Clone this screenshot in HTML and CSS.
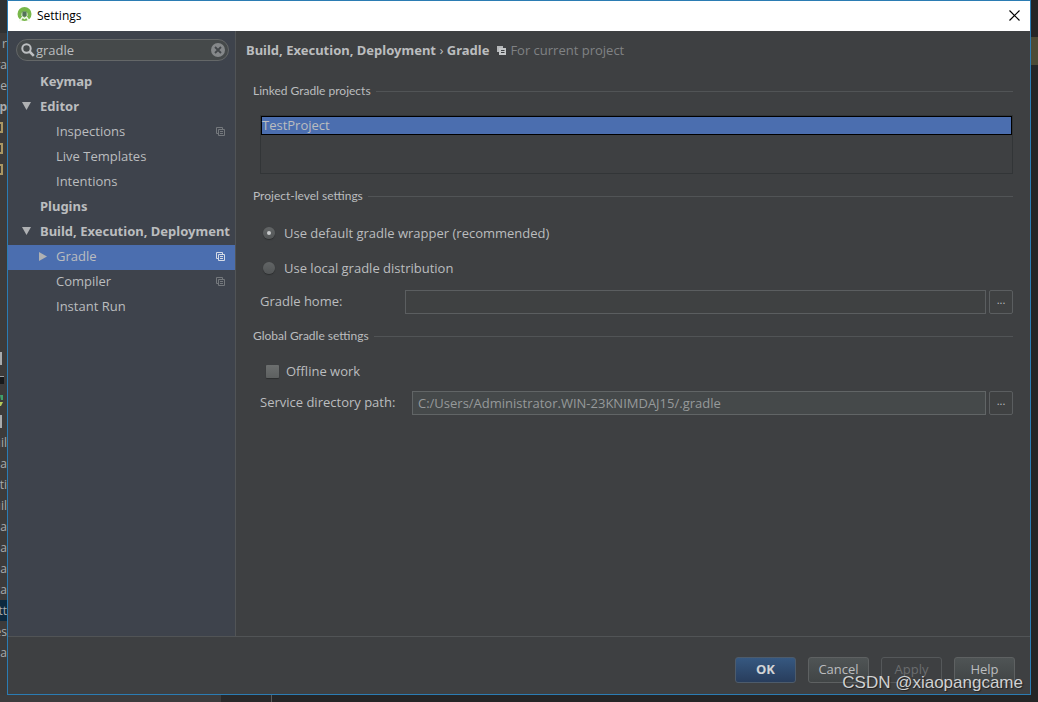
FILE: index.html
```html
<!DOCTYPE html>
<html lang="en">
<head>
<meta charset="utf-8">
<title>Settings</title>
<link rel="stylesheet" href="styles.css">
</head>
<body>
<svg class="defs" aria-hidden="true">
  <symbol id="copy" viewBox="0 0 9 9">
    <path d="M2.5 6.5H.5V.5H6.5V2.5M2.5 2.5H8.5V8.5H2.5ZM4 4.5H7M4 6.5H7" fill="none" stroke="currentColor"/>
  </symbol>
</svg>
<div class="desktop">
  <aside class="strip" aria-hidden="true">
    <span>r</span><span>ra</span><span>.e</span><span class="bold">op</span>
    <span class="folder"><i></i></span><span class="folder"><i></i></span><span class="folder"><i></i></span>
    <span class="blank"></span>
    <span class="bar"><i></i></span><span class="chip"><i></i></span>
    <span class="run"><svg width="3" height="12" viewBox="0 0 3 12"><path d="M0 0H3V5H1Z" fill="#3fa06a"/><path d="M0 7H3L1 11H0Z" fill="#b5c95a"/></svg></span>
    <span class="bar"><i></i></span>
    <span>uil</span><span>a</span><span>ti</span><span>uil</span><span>a</span><span>a</span><span>a</span><span>ca</span><span class="current">tt</span><span>es</span><span>na</span>
  </aside>

  <main class="dialog">
    <header class="titlebar">
      <svg class="logo" width="15" height="16" viewBox="0 0 15 16">
        <circle cx="7.5" cy="7" r="7" fill="#78b74a"/>
        <path d="M4 8a3.5 3.5 0 0 1 7 0v1H4Z" fill="#b9d6a6"/>
        <path d="M5.500 4.500h4v5h-4Z" fill="#55715a"/>
        <path d="M2.500 14.500l3-4.500 2 1.500 2-1.500 3 4.500" stroke="#f3f9ef" stroke-width="1.500" fill="none"/>
      </svg>
      <h1>Settings</h1>
      <button class="close" aria-label="Close"><svg width="11" height="11" viewBox="0 0 11 11"><path d="M.5.5l10 10M10.500.5l-10 10" stroke="#000" stroke-width="1.200"/></svg></button>
    </header>

    <div class="body">
      <nav class="sidebar">
        <div class="search">
          <svg width="14" height="14" viewBox="0 0 14 14"><circle cx="5.500" cy="5.500" r="4.200" fill="none" stroke="#bdbfc1" stroke-width="2"/><path d="M8.500 8.500l4.300 4.300" stroke="#bdbfc1" stroke-width="2.600"/></svg>
          <input type="text" value="gradle" aria-label="Search settings">
          <button aria-label="Clear search"><svg width="14" height="14" viewBox="0 0 14 14"><circle cx="7" cy="7" r="7" fill="#85888a"/><path d="M4 4l6 6M10 4l-6 6" stroke="#43474a" stroke-width="1.800"/></svg></button>
        </div>
        <ul class="tree">
          <li class="top">Keymap</li>
          <li class="top"><svg class="arrow" width="9" height="8" viewBox="0 0 9 8"><path d="M0 0H9L4.500 8Z"/></svg>Editor</li>
          <li>Inspections<svg class="copy"><use href="#copy"/></svg></li>
          <li>Live Templates</li>
          <li>Intentions</li>
          <li class="top">Plugins</li>
          <li class="top"><svg class="arrow" width="9" height="8" viewBox="0 0 9 8"><path d="M0 0H9L4.500 8Z"/></svg>Build, Execution, Deployment</li>
          <li class="selected"><svg class="arrow" width="8" height="9" viewBox="0 0 8 9"><path d="M0 0V9L8 4.500Z"/></svg>Gradle<svg class="copy"><use href="#copy"/></svg></li>
          <li>Compiler<svg class="copy"><use href="#copy"/></svg></li>
          <li>Instant Run</li>
        </ul>
      </nav>

      <section class="content">
        <div class="crumbs">
          <h2>Build, Execution, Deployment <span class="sep">›</span> Gradle</h2>
          <svg width="9" height="9" viewBox="0 0 9 9"><path d="M0 0H6V2H2V6H0Z" fill="#b5b7b9"/><path d="M2 2H9V9H2Z" fill="#c4c6c8"/><path d="M4 4.500H7.500M4 6.500H7.500" stroke="#3c3f41"/></svg>
          <span class="scope">For current project</span>
        </div>

        <h3>Linked Gradle projects</h3>
        <div class="group">
          <ul class="projects"><li>TestProject</li></ul>
        </div>

        <h3>Project-level settings</h3>
        <div class="group">
          <label class="choice"><input type="radio" name="dist" checked>Use default gradle wrapper (recommended)</label>
          <label class="choice"><input type="radio" name="dist">Use local gradle distribution</label>
          <div class="field">
            <label for="home">Gradle home:</label>
            <input id="home" type="text">
            <button aria-label="Browse Gradle home">...</button>
          </div>
        </div>

        <h3>Global Gradle settings</h3>
        <div class="group">
          <label class="choice check"><input type="checkbox">Offline work</label>
          <div class="field service">
            <label for="service">Service directory path:</label>
            <input id="service" type="text" placeholder="C:/Users/Administrator.WIN-23KNIMDAJ15/.gradle">
            <button aria-label="Browse service directory">...</button>
          </div>
        </div>
      </section>
    </div>

    <footer class="actions">
      <button class="primary">OK</button>
      <button>Cancel</button>
      <button disabled>Apply</button>
      <button>Help</button>
    </footer>
  </main>

  <aside class="edge" aria-hidden="true"><div class="tab"></div></aside>
  <div class="under" aria-hidden="true"></div>
  <div class="watermark">CSDN @xiaopangcame</div>
</div>
</body>
</html>
```
FILE: styles.css
```css
* { box-sizing: border-box; }
body {
  margin: 0;
  font: 13px/20px "Open Sans", "Noto Sans", sans-serif;
  color: #bbbdbf;
  background: #3c3c3d;
}
h1, h2, h3, ul { margin: 0; padding: 0; font: inherit; list-style: none; }
button, input { font: inherit; color: inherit; margin: 0; padding: 0; }
.defs { position: absolute; width: 0; height: 0; }

.desktop {
  position: relative;
  display: grid;
  grid-template: minmax(0, 1fr) 7px / 7px minmax(0, 1fr) 7px;
  min-height: 100vh;
}

/* Editor window that shows around the dialog */
.strip { overflow: hidden; padding-top: 33px; background: linear-gradient(#303233 33px, #3c3b3b 33px); color: #a9abad; }
.strip span { display: flex; justify-content: flex-end; align-items: center; height: 21px; font-size: 12px; }
.strip .bold { font-weight: bold; }
.strip .blank { height: 168px; }
.strip i { display: block; flex: none; }
.folder i { width: 7px; height: 11px; margin-right: 4px; border: 2px solid #aa9763; border-left: 0; }
.bar i { width: 2px; height: 13px; margin-right: 5px; background: #a9abad; }
.chip i { width: 7px; height: 8px; margin-right: 3px; background: #17191b; border-top: 1px solid #9a9c9e; }
.run svg { margin-right: 4px; }
.strip .current { background: #0d293e; }
.edge { background: #252627; padding-top: 37px; }
.edge .tab { height: 28px; background: #4c4b36; }
.under {
  grid-column: 1 / -1;
  background: linear-gradient(90deg, #3c3c3d 221px, #29292a 221px 271px, #5a5c5d 271px 272px, #252627 272px);
}

.dialog {
  display: flex;
  flex-direction: column;
  border: 1px solid #2b7cb3;
  background: #3e4042;
}
.titlebar { display: flex; align-items: center; height: 30px; padding: 0 10px 2px 9px; background: #fff; color: #000; font-size: 12px; }
.titlebar h1 { flex: 1; margin-left: 5px; padding-top: 2px; }
.close { display: flex; padding: 0; border: 0; background: none; }

.body { display: grid; grid-template-columns: 228px minmax(0, 1fr); flex: 1; }

.sidebar { padding-top: 8px; background: #3e434c; border-right: 1px solid #515456; }
.search {
  display: flex;
  align-items: center;
  height: 22px;
  margin: 0 6px 9px 8px;
  padding: 0 3px 0 4px;
  border: 1px solid #646768;
  border-radius: 11px;
  background: #45494a;
}
.search svg { display: block; flex: none; }
.search input { flex: 1; min-width: 0; margin-left: 1px; border: 0; background: none; outline: 0; }
.search button { border: 0; background: none; }

.tree li { position: relative; display: flex; align-items: center; height: 25px; padding: 0 10px 3px 48px; white-space: nowrap; }
.tree .top { padding-left: 32px; font-family: "Noto Sans", sans-serif; font-weight: bold; }
.arrow { position: absolute; left: 14px; fill: #afb1b3; }
.selected .arrow { left: 31px; }
.copy { width: 9px; height: 9px; margin-left: auto; color: #74787c; }
.tree .selected { background: #4b6eaf; }
.selected .copy { color: #d5dbe6; }

.content { padding: 9px 17px 16px 10px; }
.crumbs { display: flex; align-items: center; height: 20px; margin-bottom: 21px; }
.crumbs h2 { font-family: "Noto Sans", sans-serif; font-weight: bold; }
.crumbs svg { margin: 0 4px 0 8px; }
.sep { font-weight: normal; }
.scope { color: #808284; }

h3 { display: flex; align-items: center; gap: 5px; height: 20px; margin-left: 7px; font: 12px/20px Lato, sans-serif; }
h3::after { content: ""; flex: 1; height: 1px; background: #515456; }
.group { margin-left: 14px; }

.projects { height: 59px; margin: 14px 0 12px; border: 1px solid #323537; }
.projects li { height: 19px; border: 1px solid #000; background: #4b6eaf; line-height: 17px; }

.choice { display: flex; align-items: center; gap: 9px; height: 20px; margin: 0 0 15px 3px; }
h3 + .group > .choice:first-child { margin-top: 17px; }
.choice input {
  appearance: none;
  display: grid;
  place-items: center;
  width: 12px;
  height: 12px;
  border-radius: 50%;
  background: linear-gradient(#626566, #525556);
  box-shadow: 0 1px 1px #2c2e2f;
}
.choice input[type="radio"]:checked::after { content: ""; width: 4px; height: 4px; border-radius: 50%; background: #c8cacb; }
h3 + .group > .check:first-child { gap: 7px; margin: 15px 0 10px 6px; }
.choice input[type="checkbox"] { width: 13px; height: 13px; border-radius: 1px; background: linear-gradient(#6c6f6f, #5d6060); }

.field { display: grid; grid-template-columns: 142px minmax(0, 1fr) 24px; gap: 3px; align-items: center; height: 24px; margin-bottom: 12px; }
.field label { padding-bottom: 2px; }
.choice + .field { margin-top: -3px; }
.field input, .field button { height: 24px; border: 1px solid #5b5e60; background: #3f4142; }
.field input { width: 100%; padding: 0 5px; outline: 0; }
.field button { border-radius: 2px; font-size: 11px; line-height: 16px; padding-bottom: 4px; }
.service { grid-template-columns: 149px minmax(0, 1fr) 24px; }
.choice + .service { margin-top: 0; }
.service input { border-color: #616566; background: #45494a; }
.service input::placeholder { color: #96999a; opacity: 1; }

.actions { display: flex; justify-content: flex-end; gap: 12px; padding: 20px 15px 11px; border-top: 1px solid #515456; }
.actions button {
  width: 61px;
  height: 26px;
  padding-bottom: 2px;
  border: 1px solid #5e6162;
  border-radius: 3px;
  background: linear-gradient(#4f5455, #414546);
}
.actions .primary { border-color: #4d5b6b; background: linear-gradient(#365880, #283d5c); font-weight: bold; color: #d2d4d6; }
.actions button:disabled { background: none; color: #6b6d6f; border-color: #55585a; }

.watermark {
  position: absolute;
  right: 15px;
  bottom: 8px;
  font: 17px/22px "Liberation Sans", sans-serif;
  color: #d0d1d2;
  text-shadow: 1px 1px 1px #222;
}
```
